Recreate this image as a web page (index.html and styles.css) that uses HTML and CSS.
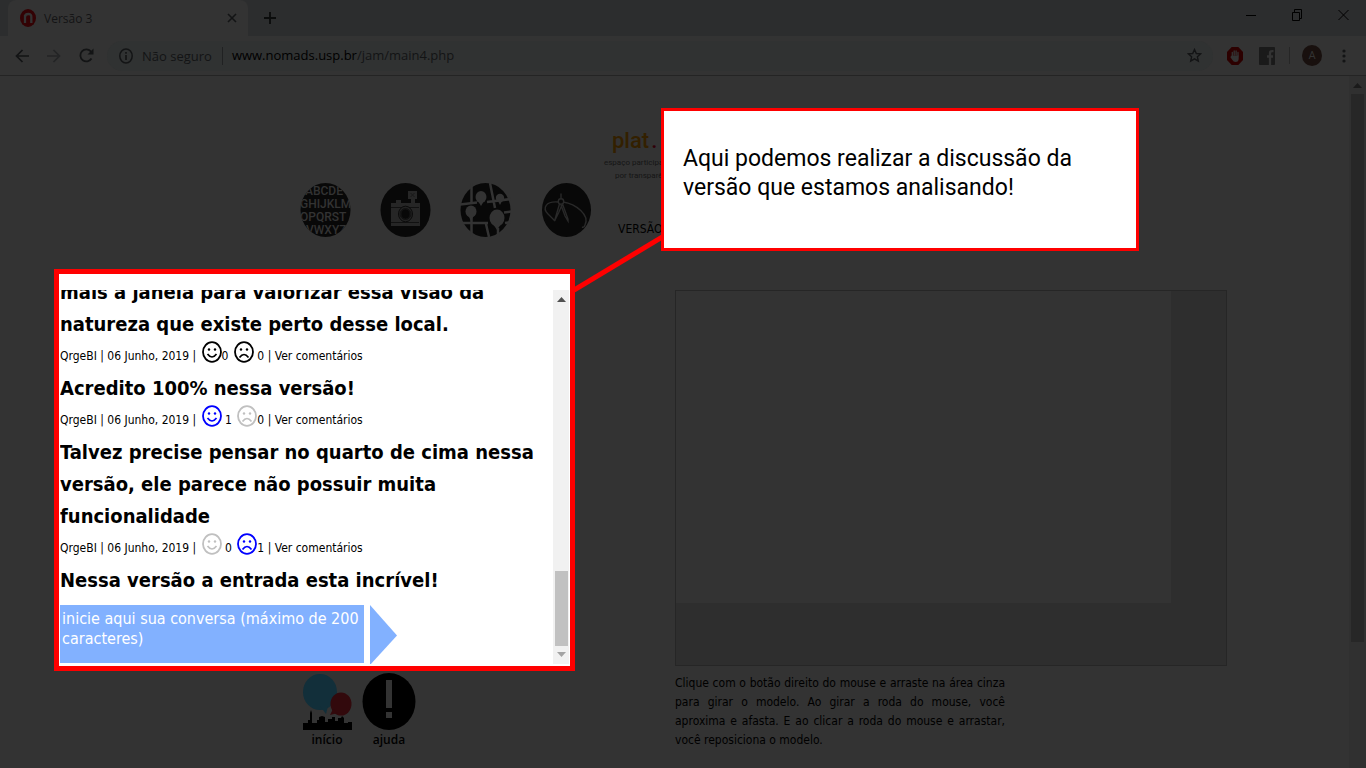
FILE: index.html
```html
<!DOCTYPE html>
<html lang="pt-BR">
<head>
<meta charset="utf-8">
<title>Versão 3</title>
<link rel="stylesheet" href="styles.css">
</head>
<body>
<svg class="defs" aria-hidden="true">
  <symbol id="smile" viewBox="0 0 20 22"><g fill="none" stroke="currentColor" stroke-width="1.800"><ellipse cx="10" cy="11" rx="9" ry="9.800"/><path d="M5.500 13q4.500 6 9 0" stroke-width="1.700"/></g><circle cx="7" cy="8.500" r="1.200" fill="currentColor"/><circle cx="13" cy="8.500" r="1.200" fill="currentColor"/></symbol>
  <symbol id="frown" viewBox="0 0 20 22"><g fill="none" stroke="currentColor" stroke-width="1.800"><ellipse cx="10" cy="11" rx="9" ry="9.800"/><path d="M5.500 16.500q4.500-6 9 0" stroke-width="1.700"/></g><circle cx="7" cy="8.500" r="1.200" fill="currentColor"/><circle cx="13" cy="8.500" r="1.200" fill="currentColor"/></symbol>
</svg>

<header class="browser">
  <div class="tabs">
    <div class="tab">
      <svg width="16" height="18" viewBox="0 0 16 18"><ellipse cx="8" cy="9" rx="8" ry="9" fill="#330204"/><path d="M5 14V6M5 8q0-3 3.300-3T11.300 8v6" fill="none" stroke="#333" stroke-width="2.300"/></svg>
      <span class="tab-title">Versão 3</span>
      <button class="icon-btn" aria-label="Fechar guia"><svg width="10" height="10" viewBox="0 0 10 10"><path d="M1 1l8 8M9 1l-8 8" stroke="#131415" stroke-width="1.600"/></svg></button>
    </div>
    <button class="icon-btn new-tab" aria-label="Nova guia"><svg width="12" height="12" viewBox="0 0 12 12"><path d="M6 0v12M0 6h12" stroke="#0b0c0c" stroke-width="1.800"/></svg></button>
    <div class="window-buttons">
      <button class="icon-btn" aria-label="Minimizar"><svg width="11" height="12" viewBox="0 0 11 12"><path d="M0 6.500h10" stroke="#000"/></svg></button>
      <button class="icon-btn" aria-label="Restaurar"><svg width="11" height="12" viewBox="0 0 11 12"><path d="M.5 3.500h7v8h-7zM2.500 3V.5h7v9H8" fill="none" stroke="#000"/></svg></button>
      <button class="icon-btn" aria-label="Fechar"><svg width="11" height="12" viewBox="0 0 11 12"><path d="M.5 1l10 10M10.500 1l-10 10" stroke="#000"/></svg></button>
    </div>
  </div>
  <div class="toolbar">
    <button class="icon-btn" aria-label="Voltar"><svg width="14" height="14" viewBox="0 0 14 14"><path d="M14 7H1.500M7.500 1l-6 6 6 6" fill="none" stroke="#131415" stroke-width="1.700"/></svg></button>
    <button class="icon-btn" aria-label="Avançar"><svg width="14" height="14" viewBox="0 0 14 14"><path d="M0 7h12.500M6.500 1l6 6-6 6" fill="none" stroke="#242526" stroke-width="1.700"/></svg></button>
    <button class="icon-btn" aria-label="Recarregar"><svg width="15" height="15" viewBox="0 0 15 15"><path d="M12.500 10.500A6 6 0 1 1 11.800 3.400l1.400 1.500" fill="none" stroke="#131415" stroke-width="1.800"/><path d="M14.500.5v6h-6z" fill="#131415"/></svg></button>
    <div class="address">
      <svg width="14" height="16" viewBox="0 0 14 16"><ellipse cx="7" cy="8" rx="6.200" ry="7" fill="none" stroke="#131415" stroke-width="1.500"/><path d="M7 7v5M7 4v1.700" stroke="#131415" stroke-width="1.700"/></svg>
      <span class="security">Não seguro</span>
      <span class="url">www.nomads.usp.br<span class="path">/jam/main4.php</span></span>
      <button class="icon-btn" aria-label="Favoritar"><svg width="15" height="15" viewBox="0 0 15 15"><path d="M7.500 1.500l1.800 4 4.300.4-3.200 2.900.9 4.300-3.800-2.300-3.800 2.300.9-4.300L1.400 5.900l4.300-.4z" fill="none" stroke="#131415" stroke-width="1.400"/></svg></button>
    </div>
    <div class="extensions">
      <button class="icon-btn" aria-label="Bloqueador"><svg width="16" height="18" viewBox="0 0 16 18"><path d="M4.700 0h6.600L16 5v8l-4.700 5H4.700L0 13V5z" fill="#2c0000"/><path d="M5.300 9.500V5.500M7.200 8V3.800M9.100 8V4M11 9V5.500" stroke="#333" stroke-width="1.300" stroke-linecap="round"/><path d="M4.700 8.500h7v3q0 3.500-3.200 3.500-2 0-3.500-2.500L3.300 10z" fill="#333"/></svg></button>
      <button class="icon-btn" aria-label="Facebook"><svg width="16" height="18" viewBox="0 0 16 18"><rect width="16" height="18" rx="1" fill="#1a1a1a"/><path d="M14.500 4.200H13q-2 0-2 2V18M8 9.500h6" fill="none" stroke="#333" stroke-width="2.300"/></svg></button>
      <span class="separator"></span>
      <button class="avatar">A</button>
      <button class="icon-btn" aria-label="Menu"><svg width="4" height="14" viewBox="0 0 4 14"><g fill="#131415"><circle cx="2" cy="2" r="1.600"/><circle cx="2" cy="7" r="1.600"/><circle cx="2" cy="12" r="1.600"/></g></svg></button>
    </div>
  </div>
</header>

<div class="viewport">
  <div class="page">
    <div class="masthead">
      <nav class="tools">
        <a href="#texto" aria-label="Texto"><svg width="51" height="54" viewBox="0 0 51 54"><defs><clipPath id="disc"><ellipse cx="25.500" cy="27" rx="25" ry="27"/></clipPath></defs><ellipse cx="25.500" cy="27" rx="25" ry="27" fill="#080808"/><g clip-path="url(#disc)" class="letters"><text x="5" y="12">ABCDE</text><text x="0" y="25">GHIJKLM</text><text x="0" y="38">OPQRST</text><text x="6" y="51">VWXYZ</text></g></svg></a>
        <a href="#foto" aria-label="Foto"><svg width="51" height="54" viewBox="0 0 51 54"><ellipse cx="25.500" cy="27" rx="25" ry="27" fill="#080808"/><path d="M28 8h9v8h-9zM31 16h4v5h-4zM16 17h5v3h-5zM11 20h29v23H11z" fill="#262626"/><path d="M30.500 10l4 4M34.500 10l-4 4" stroke="#181818"/><path d="M11 24.500h28M11 39.500h28" stroke="#111"/><ellipse cx="25.500" cy="31" rx="7" ry="7.800" fill="#222" stroke="#0b0b0b"/><ellipse cx="25.500" cy="31" rx="4.500" ry="5" fill="#080808" stroke="#111"/><circle cx="25.500" cy="31" r="5.500" fill="none" stroke="#111"/></svg></a>
        <a href="#mapa" aria-label="Mapa"><svg width="51" height="54" viewBox="0 0 51 54"><ellipse cx="25.500" cy="27" rx="25" ry="27" fill="#080808"/><g fill="none" stroke="#333" stroke-width="2.500"><path d="M11.500 0v19M0 21.500l17-2M27 19l24-3M30 0l5 25M11.500 34v20M3 40h25M26 41l3 13M44 29.500l7-1M38 45v9M45 40l6-1"/></g><g fill="#333"><ellipse cx="21" cy="14" rx="5.500" ry="6"/><path d="M18 18l3 5 3-5z"/><circle cx="40" cy="15" r="4.200"/><path d="M38 18l2 4 2-4z"/><ellipse cx="11" cy="28.500" rx="5.500" ry="6"/><path d="M8 32l3 6 3-6z"/><ellipse cx="37" cy="35" rx="7.500" ry="8.500"/><path d="M33 41l4 6 4-6z"/></g></svg></a>
        <a href="#desenho" aria-label="Desenho"><svg width="51" height="54" viewBox="0 0 51 54"><ellipse cx="26.500" cy="27" rx="24.500" ry="27" fill="#080808"/><g fill="none" stroke="#292929" stroke-width="1.400"><path d="M18 19C6 18 2 25 8 31q4 4 7 7M23 19c13 2 27 13 22 23q-1 3-3 2"/><circle cx="21" cy="18.500" r="2.700"/><path d="M21 10.500v5M19.500 21l-5 17 4-8 3.500-8M22.500 21l5.500 15v2l-3-5-4-11"/></g></svg></a>
      </nav>
      <div class="brand">
        <p class="brand-name">plat<span class="dot">.</span></p>
        <p class="brand-line">espaço participa</p>
        <p class="brand-line">por transparê</p>
        <p class="version">VERSÃO</p>
      </div>
    </div>

    <main class="columns">
      <section class="left">
        <div class="chat">
          <div class="feed">
            <h2>mais a janela para valorizar essa visão da natureza que existe perto desse local.</h2>
            <p class="meta">QrgeBI | 06 Junho, 2019 | <svg class="face"><use href="#smile"/></svg>0 <svg class="face"><use href="#frown"/></svg> 0 | <a href="#c1">Ver comentários</a></p>
            <h2>Acredito 100% nessa versão!</h2>
            <p class="meta">QrgeBI | 06 Junho, 2019 | <svg class="face on"><use href="#smile"/></svg> 1 <svg class="face off"><use href="#frown"/></svg>0 | <a href="#c2">Ver comentários</a></p>
            <h2>Talvez precise pensar no quarto de cima nessa versão, ele parece não possuir muita funcionalidade</h2>
            <p class="meta">QrgeBI | 06 Junho, 2019 | <svg class="face off"><use href="#smile"/></svg> 0 <svg class="face on"><use href="#frown"/></svg>1 | <a href="#c3">Ver comentários</a></p>
            <h2>Nessa versão a entrada esta incrível!</h2>
            <form class="composer">
              <textarea aria-label="Nova conversa" placeholder="inicie aqui sua conversa (máximo de 200 caracteres)"></textarea>
              <button type="button" class="icon-btn" aria-label="Enviar"><svg width="27" height="60" viewBox="0 0 27 60"><path d="M0 0l27 30.500L0 60z" fill="#82b1ff"/></svg></button>
            </form>
          </div>
          <div class="scrollbar light" aria-hidden="true">
            <svg width="9" height="5" viewBox="0 0 9 5"><path d="M4.500 0L9 5H0z" fill="#505050"/></svg>
            <div class="thumb"></div>
            <svg width="9" height="5" viewBox="0 0 9 5"><path d="M4.500 5L9 0H0z" fill="#a3a3a3"/></svg>
          </div>
        </div>
        <nav class="shortcuts">
          <a href="#inicio"><svg width="50" height="57" viewBox="0 0 50 57"><ellipse cx="18" cy="19" rx="17" ry="18" fill="#122f3a"/><path d="M18 33l6 8 2-8z" fill="#122f3a"/><ellipse cx="39" cy="31" rx="10.500" ry="11.500" fill="#32090c"/><path d="M31 36l-3 6 8-2z" fill="#32090c"/><path d="M1 57V50h5V47h2V40l1-3 1 3v10h5v-3h2v-3l3-1 3 1v5h3v-3h4v-2h3v4h3v-3h3l1-2 2 2v5h4v-1h4v9z" fill="#000"/></svg><span>início</span></a>
          <a href="#ajuda"><svg width="54" height="57" viewBox="0 0 54 57"><ellipse cx="27" cy="28.500" rx="26.500" ry="28.500" fill="#000"/><path d="M24 7h6v28h-6zM24 39h6v6h-6z" fill="#333"/></svg><span>ajuda</span></a>
        </nav>
      </section>
      <section class="right">
        <div class="viewer"><div class="canvas"></div></div>
        <p class="hint">Clique com o botão direito do mouse e arraste na área cinza para girar o modelo. Ao girar a roda do mouse, você aproxima e afasta. E ao clicar a roda do mouse e arrastar, você reposiciona o modelo.</p>
      </section>
    </main>
  </div>
  <div class="scrollbar dark" aria-hidden="true">
    <svg width="9" height="5" viewBox="0 0 9 5"><path d="M4.500 0L9 5H0z" fill="#1a1a1a"/></svg>
    <div class="thumb"></div>
  </div>
</div>

<svg class="connector" width="92" height="60" viewBox="0 0 92 60" aria-hidden="true"><path d="M1 56L91 2" stroke="#f00" stroke-width="5"/></svg>
<aside class="callout">Aqui podemos realizar a discussão da versão que estamos analisando!</aside>
</body>
</html>
```
FILE: styles.css
```css
* { box-sizing: border-box; }

body {
  margin: 0;
  min-height: 100vh;
  display: flex;
  flex-direction: column;
  position: relative;
  overflow: hidden;
  background: #333;
  color: #000;
  font: 12px/19px "DejaVu Sans Condensed", "DejaVu Sans", sans-serif;
}

h2, p { margin: 0; }
a { color: inherit; text-decoration: none; }
.defs { position: absolute; width: 0; height: 0; }

.icon-btn {
  display: flex;
  padding: 0;
  border: 0;
  background: none;
}

/* Browser chrome */
.browser { font-family: "Open Sans", sans-serif; }
.tabs {
  display: flex;
  align-items: center;
  height: 36px;
  padding: 0 17px 0 8px;
  background: #2c2d2e;
}
.tab {
  display: flex;
  align-items: center;
  gap: 8px;
  width: 240px;
  height: 36px;
  padding: 0 11px 0 12px;
  border-radius: 8px 8px 0 0;
  background: #333;
  color: #131415;
}
.tab-title { flex: 1; }
.new-tab { margin-left: 16px; }
.window-buttons {
  display: flex;
  gap: 35px;
  height: 24px;
  margin-left: auto;
  padding-top: 3px;
}
.toolbar {
  display: flex;
  align-items: center;
  gap: 18px;
  height: 40px;
  padding: 0 20px 0 15px;
  border-bottom: 1px solid #242424;
}
.address {
  flex: 1;
  display: flex;
  align-items: center;
  height: 30px;
  margin-left: -5px;
  padding: 0 11px 0 12px;
  border-radius: 15px;
  background: #303232;
  font-size: 13px;
}
.security {
  margin-left: 9px;
  padding-right: 10px;
  border-right: 1px solid #202122;
  color: #131415;
  line-height: 18px;
}
.url { flex: 1; padding-left: 9px; }
.path { color: #131415; }
.extensions {
  display: flex;
  align-items: center;
  gap: 16px;
  margin-left: -4px;
}
.separator {
  width: 1px;
  height: 17px;
  margin: 0 -4px 0 -2px;
  background: #262626;
}
.avatar {
  width: 20px;
  height: 21px;
  margin-right: 4px;
  padding: 0;
  border: 0;
  border-radius: 50%;
  background: #18100e;
  color: #333;
  font: 11px/21px Roboto, sans-serif;
}

/* Page */
.viewport { flex: 1; display: flex; }
.page { flex: 1; }
.masthead {
  display: flex;
  height: 193px;
  padding-left: 300px;
}
.tools {
  display: flex;
  gap: 29px;
  padding-top: 107px;
}
.tools a { height: 54px; }
.letters {
  fill: #333;
  font: 500 12px Roboto, sans-serif;
}
.brand {
  margin-left: 13px;
  padding-top: 50px;
  color: #151515;
}
.brand-name {
  padding-left: 8px;
  color: #332000;
  font: 500 22px/30px Roboto, sans-serif;
}
.brand-name .dot { margin-left: 2px; color: #300008; }
.brand-line {
  font: 8px/13px Roboto, sans-serif;
}
.brand-line + .brand-line { padding-left: 11px; }
.version { padding: 38px 0 0 14px; color: #000; }

.columns {
  display: grid;
  grid-template-columns: 521fr 552fr;
  gap: 100px;
  padding: 0 122px 0 54px;
}

.chat {
  display: flex;
  height: 402px;
  padding: 16px 1px 2px 1px;
  border: 5px solid #f00;
  background: #fff;
}
.feed {
  flex: 1;
  display: flex;
  flex-direction: column;
  justify-content: flex-end;
  min-width: 0;
  overflow: hidden;
}
.feed > * { flex-shrink: 0; }
.feed h2 {
  padding-right: 16px;
  font-size: 20px;
  line-height: 32px;
}
.meta {
  height: 32px;
  line-height: 32px;
  white-space: nowrap;
}
.face {
  width: 20px;
  height: 22px;
  margin-left: 2px;
  vertical-align: -3px;
}
.on { color: #00f; }
.off { color: #c0c0c0; }
.composer {
  display: flex;
  gap: 6px;
  height: 68px;
  padding-top: 9px;
}
textarea {
  width: 304px;
  height: 58px;
  padding: 4px 2px;
  border: 0;
  resize: none;
  overflow: hidden;
  background: #82b1ff;
  color: #fff;
  font: 16px/20px "DejaVu Sans Condensed", "DejaVu Sans", sans-serif;
}
textarea::placeholder { color: #fff; opacity: 1; }

.scrollbar {
  display: flex;
  flex-direction: column;
  align-items: center;
}
.scrollbar.light {
  justify-content: flex-end;
  width: 16px;
  padding: 7px 0;
  background: #f1f1f1;
}
.light svg:first-child { margin-bottom: auto; }
.light .thumb {
  width: 13px;
  height: 75px;
  margin-bottom: 6px;
  background: #c1c1c1;
}
.scrollbar.dark {
  width: 17px;
  padding-top: 7px;
  background: #303030;
}
.dark .thumb {
  width: 13px;
  height: 548px;
  margin-top: 6px;
  background: #272727;
}

.shortcuts {
  display: flex;
  gap: 10px;
  padding: 2px 0 0 248px;
  font-family: "Open Sans", sans-serif;
  font-weight: 600;
}
.shortcuts a {
  display: flex;
  flex-direction: column;
  align-items: center;
}

.right { padding-top: 21px; }
.viewer {
  height: 376px;
  padding: 0 55px 62px 0;
  border: 1px solid #262626;
  background: #2e2e2e;
}
.canvas { height: 312px; background: #333; }
.hint {
  max-width: 330px;
  padding-top: 8px;
  text-align: justify;
}

/* Annotation over the page */
.callout {
  position: absolute;
  left: 661px;
  top: 108px;
  width: 478px;
  height: 143px;
  padding: 33px 19px;
  border: 3px solid #f00;
  background: #fff;
  font: 23px/29px Roboto, sans-serif;
}
.connector { position: absolute; left: 573px; top: 234px; }
```
